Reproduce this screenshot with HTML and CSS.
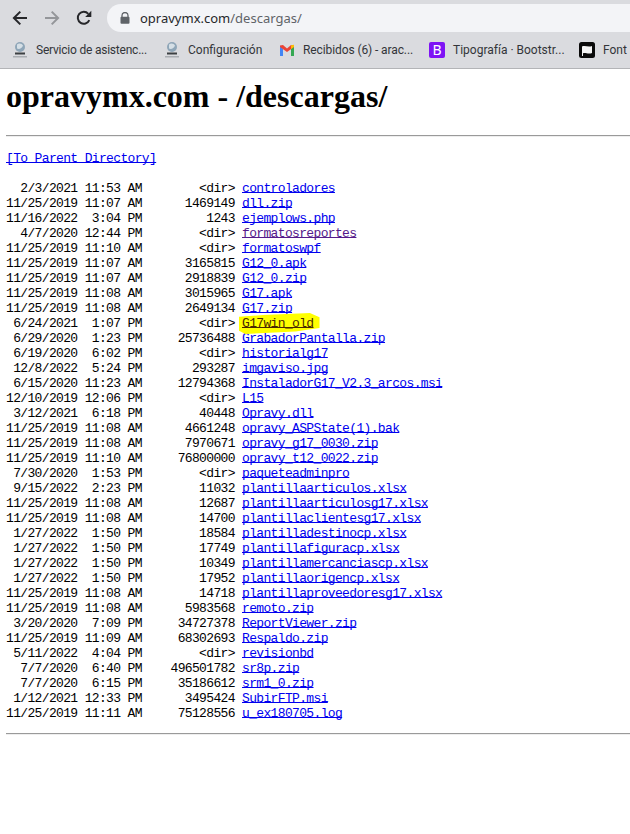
FILE: index.html
```html
<!DOCTYPE html>
<html lang="es">
<head>
<meta charset="utf-8">
<title>opravymx.com - /descargas/</title>
<link rel="stylesheet" href="styles.css">
</head>
<body>
<header class="chrome">
  <div class="toolbar">
    <svg class="nav-icon" width="16" height="16" viewBox="0 0 16 16"><path d="M15 8H2.500M8.300 1.600 1.900 8l6.400 6.400" fill="none" stroke="#26272a" stroke-width="2"/></svg>
    <svg class="nav-icon" width="16" height="16" viewBox="0 0 16 16"><path d="M1 8h12.500M7.700 1.600 14.100 8l-6.400 6.400" fill="none" stroke="#94969a" stroke-width="2"/></svg>
    <svg class="nav-icon" width="16" height="16" viewBox="0 0 16 16"><path d="M13.300 10.200A6 6 0 1 1 12.300 3.800" fill="none" stroke="#26272a" stroke-width="2"/><path d="M9.200 6.900h6.100V.8z" fill="#26272a"/></svg>
    <div class="omnibox">
      <svg class="lock" width="10" height="12" viewBox="0 0 10 12"><path d="M2 5V3.500a3 3 0 0 1 6 0V5" fill="none" stroke="#5f6368" stroke-width="1.300"/><rect x="0.500" y="4.800" width="9" height="7" rx="1" fill="#5f6368"/></svg>
      <span class="url"><span class="host">opravymx.com</span>/descargas/</span>
    </div>
  </div>
  <nav class="bookmarks">
    <a class="bm">
      <svg width="16" height="16" viewBox="0 0 16 16"><circle cx="8" cy="5" r="5" fill="#8fa6b8"/><path d="M5 2.500c2-2 5-1 6 1-1 3-4 4-6 3z" fill="#d5dfe6"/><rect x="3" y="10.500" width="10" height="2" fill="#3c4043"/><rect x="1" y="14" width="14" height="1.500" fill="#a9adb2"/></svg>
      <span class="bm-label l1">Servicio de asistenc...</span>
    </a>
    <a class="bm">
      <svg width="16" height="16" viewBox="0 0 16 16"><circle cx="8" cy="5" r="5" fill="#8fa6b8"/><path d="M5 2.500c2-2 5-1 6 1-1 3-4 4-6 3z" fill="#d5dfe6"/><rect x="3" y="10.500" width="10" height="2" fill="#3c4043"/><rect x="1" y="14" width="14" height="1.500" fill="#a9adb2"/></svg>
      <span class="bm-label l2">Configuración</span>
    </a>
    <a class="bm">
      <svg width="16" height="16" viewBox="0 0 16 16"><path d="M1 3.500V14h3V7z" fill="#4285f4"/><path d="M12 7v7h3V3.500z" fill="#34a853"/><path d="M1 3.500 4 3l4 3.500V10L1 5z" fill="#ea4335"/><path d="M15 3.500 12 3 8 6.500V10l7-5z" fill="#ea4335"/><path d="M12 3.200 15 2.800V5l-3 2z" fill="#fbbc04"/></svg>
      <span class="bm-label l3">Recibidos (6) - arac...</span>
    </a>
    <a class="bm">
      <span class="bs-icon">B</span>
      <span class="bm-label l4">Tipografía · Bootstr...</span>
    </a>
    <a class="bm">
      <svg width="16" height="16" viewBox="0 0 16 16"><rect width="16" height="16" rx="2.500" fill="#0b0b0b"/><path d="M3 4.500c3-1.500 6 1 10-.5v7c-4 1.500-7-1-9 .3V14H3z" fill="#f5f5f5"/></svg>
      <span class="bm-label">Font</span>
    </a>
  </nav>
</header>
<main class="page">
<h1 class="title">opravymx.com - /descargas/</h1>
<hr class="rule">
<pre class="listing"><a href="#p">[To Parent Directory]</a>

  2/3/2021 11:53 AM        &lt;dir&gt; <a href="#">controladores</a>
11/25/2019 11:07 AM      1469149 <a href="#">dll.zip</a>
11/16/2022  3:04 PM         1243 <a href="#">ejemplows.php</a>
  4/7/2020 12:44 PM        &lt;dir&gt; <a href="#" class="visited">formatosreportes</a>
11/25/2019 11:10 AM        &lt;dir&gt; <a href="#">formatoswpf</a>
11/25/2019 11:07 AM      3165815 <a href="#">G12_0.apk</a>
11/25/2019 11:07 AM      2918839 <a href="#">G12_0.zip</a>
11/25/2019 11:08 AM      3015965 <a href="#">G17.apk</a>
11/25/2019 11:08 AM      2649134 <a href="#">G17.zip</a>
 6/24/2021  1:07 PM        &lt;dir&gt; <a href="#" class="visited marked">G17win_old</a>
 6/29/2020  1:23 PM     25736488 <a href="#">GrabadorPantalla.zip</a>
 6/19/2020  6:02 PM        &lt;dir&gt; <a href="#">historialg17</a>
 12/8/2022  5:24 PM       293287 <a href="#">imgaviso.jpg</a>
 6/15/2020 11:23 AM     12794368 <a href="#">InstaladorG17_V2.3_arcos.msi</a>
12/10/2019 12:06 PM        &lt;dir&gt; <a href="#">L15</a>
 3/12/2021  6:18 PM        40448 <a href="#">Opravy.dll</a>
11/25/2019 11:08 AM      4661248 <a href="#">opravy_ASPState(1).bak</a>
11/25/2019 11:08 AM      7970671 <a href="#">opravy_g17_0030.zip</a>
11/25/2019 11:10 AM     76800000 <a href="#">opravy_t12_0022.zip</a>
 7/30/2020  1:53 PM        &lt;dir&gt; <a href="#">paqueteadminpro</a>
 9/15/2022  2:23 PM        11032 <a href="#">plantillaarticulos.xlsx</a>
11/25/2019 11:08 AM        12687 <a href="#">plantillaarticulosg17.xlsx</a>
11/25/2019 11:08 AM        14700 <a href="#">plantillaclientesg17.xlsx</a>
 1/27/2022  1:50 PM        18584 <a href="#">plantilladestinocp.xlsx</a>
 1/27/2022  1:50 PM        17749 <a href="#">plantillafiguracp.xlsx</a>
 1/27/2022  1:50 PM        10349 <a href="#">plantillamercanciascp.xlsx</a>
 1/27/2022  1:50 PM        17952 <a href="#">plantillaorigencp.xlsx</a>
11/25/2019 11:08 AM        14718 <a href="#">plantillaproveedoresg17.xlsx</a>
11/25/2019 11:08 AM      5983568 <a href="#">remoto.zip</a>
 3/20/2020  7:09 PM     34727378 <a href="#">ReportViewer.zip</a>
11/25/2019 11:09 AM     68302693 <a href="#">Respaldo.zip</a>
 5/11/2022  4:04 PM        &lt;dir&gt; <a href="#">revisionbd</a>
  7/7/2020  6:40 PM    496501782 <a href="#">sr8p.zip</a>
  7/7/2020  6:15 PM     35186612 <a href="#">srm1_0.zip</a>
 1/12/2021 12:33 PM      3495424 <a href="#">SubirFTP.msi</a>
11/25/2019 11:11 AM     75128556 <a href="#">u_ex180705.log</a>
</pre>
<hr class="rule rule-end">
</main>
</body>
</html>
```
FILE: styles.css
```css
* { box-sizing: border-box; }
html, body { margin: 0; padding: 0; background: #fff; overflow: hidden; }
body { width: 630px; height: 834px; }

.chrome { background: #dadbdf; height: 69px; border-bottom: 1px solid #b3b4b7; overflow: hidden; }
.toolbar { display: flex; align-items: center; height: 36px; padding-left: 12px; gap: 16px; }
.nav-icon { flex: none; }
.omnibox {
  flex: none; display: flex; align-items: center; width: 540px; height: 28px; margin-left: -1px;
  background: #f3f4f7; border-radius: 14px; padding-left: 13px;
}
.lock { flex: none; margin-right: 10px; }
.url { font: 13px "Noto Sans", sans-serif; color: #5f6368; white-space: nowrap; }
.host { color: #26272a; }

.bookmarks { display: flex; align-items: center; height: 28px; padding-left: 12px; gap: 16px; white-space: nowrap; }
.bm { display: flex; align-items: center; gap: 8px; flex: none; }
.bm svg { flex: none; }
.bm-label { font: 12px Roboto, sans-serif; color: #333539; }
.l1 { width: 112px; letter-spacing: -0.220px; }
.l2 { width: 75px; }
.l3 { width: 110px; letter-spacing: -0.100px; }
.l4 { width: 110px; }
.bs-icon {
  flex: none; width: 16px; height: 16px; border-radius: 2px; background: #7e13f5; color: #fff;
  font: 14px/16px "Noto Sans", sans-serif; text-align: center;
}

.page { padding: 0 6px; }
.title { font: bold 32px/37px "Liberation Serif", serif; color: #000; margin: 9px 0 0; }
.rule { height: 2px; margin: 20px -6px 0 0; border: 0; border-top: 1px solid #9a9a9a; border-bottom: 1px solid #eee; }
.listing { font: 13px/15px "Liberation Mono", monospace; letter-spacing: -0.650px; color: #000; margin: 14px 0 0; }
.listing a { color: #0000ee; text-decoration: underline; text-decoration-thickness: 1px; text-underline-offset: 0; text-decoration-skip-ink: none; }
.listing a.visited { color: #551a8b; }
.listing a.marked { color: #4a2a00; position: relative; z-index: 0; }
.marked::before {
  content: ""; position: absolute; z-index: -1; left: -3px; right: -6px; top: -3px; bottom: -3px;
  background: #ffff00; clip-path: polygon(0 18%, 30% 10%, 88% 0, 100% 20%, 100% 72%, 70% 88%, 8% 100%, 0 85%);
}
.rule-end { margin-top: 12px; }
```
